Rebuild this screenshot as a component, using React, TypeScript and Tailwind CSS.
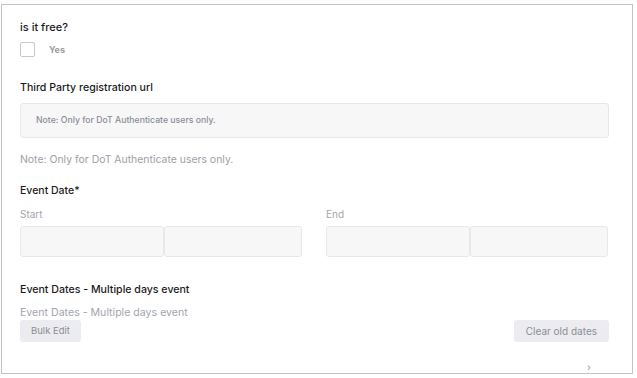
import { useState } from "react";

const font = { fontFamily: "Inter, 'Noto Sans', sans-serif" };

function Field({ className = "" }: { className?: string }) {
  return (
    <div
      className={`h-[31px] rounded-[3px] border border-[#e8e8ec] bg-[#f7f7f7] ${className}`}
    />
  );
}

function DatePair({ label }: { label: string }) {
  return (
    <div className="flex flex-col">
      <span className="text-[10px] leading-[14px] text-[#a3a5ad]">{label}</span>
      <div className="mt-[5px] flex">
        <Field className="w-[144px]" />
        <Field className="w-[138px]" />
      </div>
    </div>
  );
}

export default function App() {
  const [free, setFree] = useState(false);

  return (
    <div className="h-[378px] w-[637px] bg-white pt-[4px] pl-[1px]" style={font}>
      <div className="relative h-[370px] w-[632px] border-[1.5px] border-[#c3c3c6] px-[18px] pt-[14px]">
        <h3 className="text-[11px] leading-[16px] font-medium text-[#1b1b22]">is it free?</h3>
        <label className="mt-[7px] flex items-center gap-[14px]">
          <button
            onClick={() => setFree(!free)}
            className="h-[15px] w-[15px] rounded-[2px] border border-[#c9c9cd] bg-white"
          />
          <span className="text-[9px] font-bold text-[#9b9da6]">Yes</span>
        </label>

        <h3 className="mt-[23px] text-[10.6px] leading-[16px] font-medium text-[#1b1b22]">
          Third Party registration url
        </h3>
        <div className="mt-[7px] flex h-[35px] w-[589px] items-center rounded-[3px] border border-[#e8e8ec] bg-[#f7f7f7] px-[15px]">
          <span className="text-[8.7px] font-medium text-[#8a8d98]">
            Note: Only for DoT Authenticate users only.
          </span>
        </div>
        <p className="mt-[15px] text-[10.45px] leading-[14px] text-[#9ea0a8]">
          Note: Only for DoT Authenticate users only.
        </p>

        <h3 className="mt-[16px] text-[10.5px] leading-[16px] font-medium text-[#1b1b22]">
          Event Date*
        </h3>
        <div className="mt-[8px] flex gap-[24px]">
          <DatePair label="Start" />
          <DatePair label="End" />
        </div>

        <h3 className="mt-[25px] text-[10.6px] leading-[16px] font-medium text-[#1b1b22]">
          Event Dates - Multiple days event
        </h3>
        <p className="mt-[8px] text-[10.6px] leading-[14px] text-[#a3a5ad]">
          Event Dates - Multiple days event
        </p>
        <div className="flex w-[589px] items-start justify-between">
          <button className="h-[22px] rounded-[3px] bg-[#ececf0] px-[11px] text-[9.5px] text-[#8b8d96]">
            Bulk Edit
          </button>
          <button className="h-[22px] rounded-[3px] bg-[#ececf0] px-[12px] text-[10px] text-[#8b8d96]">
            Clear old dates
          </button>
        </div>
        <span className="absolute bottom-[0px] left-[585px] text-[10px] leading-[12px] text-[#9a9ca5]">›</span>
      </div>
    </div>
  );
}
